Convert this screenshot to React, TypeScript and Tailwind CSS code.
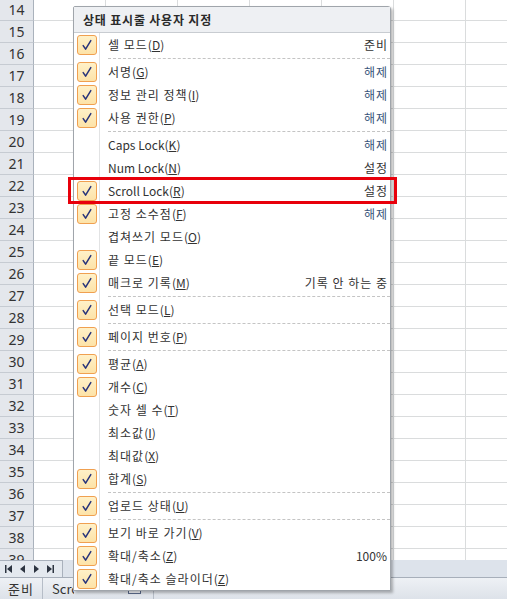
import { FC, ReactNode } from "react";

type Item = {
  label: ReactNode;
  value?: string;
  checked: boolean;
  sepAfter?: boolean;
  blue?: boolean;
};

// Korean label gets a bit of tracking (Malgun-like width), latin ones don't
const m = (text: string, key: string, latin = false) => (
  <>
    <span className={latin ? "" : "tracking-[1px]"}>{text}</span>(<u>{key}</u>)
  </>
);

const items: Item[] = [
  { label: m("셀 모드", "D"), value: "준비", checked: true, sepAfter: true },
  { label: m("서명", "G"), value: "해제", checked: true, blue: true },
  { label: m("정보 관리 정책", "I"), value: "해제", checked: true, blue: true },
  { label: m("사용 권한", "P"), value: "해제", checked: true, blue: true, sepAfter: true },
  { label: m("Caps Lock", "K", true), value: "해제", checked: false, blue: true },
  { label: m("Num Lock", "N", true), value: "설정", checked: false },
  { label: m("Scroll Lock", "R", true), value: "설정", checked: true },
  { label: m("고정 소수점", "F"), value: "해제", checked: true, blue: true },
  { label: m("겹쳐쓰기 모드", "O"), checked: false },
  { label: m("끝 모드", "E"), checked: true },
  { label: m("매크로 기록", "M"), value: "기록 안 하는 중", checked: true, sepAfter: true },
  { label: m("선택 모드", "L"), checked: true, sepAfter: true },
  { label: m("페이지 번호", "P"), checked: true, sepAfter: true },
  { label: m("평균", "A"), checked: true },
  { label: m("개수", "C"), checked: true },
  { label: m("숫자 셀 수", "T"), checked: false },
  { label: m("최소값", "I"), checked: false },
  { label: m("최대값", "X"), checked: false },
  { label: m("합계", "S"), checked: true, sepAfter: true },
  { label: m("업로드 상태", "U"), checked: true, sepAfter: true },
  { label: m("보기 바로 가기", "V"), checked: true },
  { label: m("확대/축소", "Z"), value: "100%", checked: true },
  { label: m("확대/축소 슬라이더", "Z"), checked: true },
];

const rows = Array.from({ length: 26 }, (_, i) => 14 + i);
const cols = Array.from({ length: 7 }, (_, i) => i);

const CheckBox: FC = () => (
  <div className="w-[20px] h-[20px] rounded-[3px] border border-[#f0a050] bg-gradient-to-b from-[#fff1c8] to-[#fde3a8] flex items-center justify-center">
    <svg width="14" height="14" viewBox="0 0 14 14">
      <path
        d="M3.2 7.6 L5.6 11.2 L10.8 2.6"
        fill="none"
        stroke="#27337a"
        strokeWidth="1.5"
        strokeLinecap="round"
        strokeLinejoin="round"
      />
    </svg>
  </div>
);

const App: FC = () => {
  return (
    <div
      className="relative w-[507px] h-[599px] overflow-hidden flex flex-col bg-white"
      style={{ fontFamily: '"Noto Sans CJK KR", "Noto Sans", sans-serif' }}
    >
      {/* sheet grid */}
      <div className="flex-1 overflow-hidden">
        <div className="-mt-[1px]">
          {rows.map((r) => (
            <div key={r} className="flex h-[22px]">
              <div className="w-[34px] shrink-0 h-full border-r border-b border-r-[#aab2bc] border-b-[#c6cbd2] bg-[#e4e7ec] flex items-center justify-center text-[14px] text-[#333] font-['Noto_Sans']">
                {r}
              </div>
              {cols.map((c) => (
                <div key={c} className="w-[72px] shrink-0 h-full border-r border-b border-[#dadcdd]" />
              ))}
            </div>
          ))}
        </div>
      </div>

      {/* sheet tab bar */}
      <div className="h-[17px] shrink-0 flex bg-[#dde3eb]">
        <div className="w-[63px] h-full bg-[#e4e9ef] border-t border-r border-[#a9b1bc] flex items-center gap-[7px] pl-[5px] text-[#2c3440]">
          <svg width="8" height="8" viewBox="0 0 8 8">
            <rect x="0" y="0" width="1.5" height="8" fill="currentColor" />
            <path d="M7 0 L2 4 L7 8 Z" fill="currentColor" />
          </svg>
          <svg width="6" height="8" viewBox="0 0 6 8">
            <path d="M5 0 L0 4 L5 8 Z" fill="currentColor" />
          </svg>
          <svg width="6" height="8" viewBox="0 0 6 8">
            <path d="M1 0 L6 4 L1 8 Z" fill="currentColor" />
          </svg>
          <svg width="8" height="8" viewBox="0 0 8 8">
            <path d="M1 0 L6 4 L1 8 Z" fill="currentColor" />
            <rect x="6.5" y="0" width="1.5" height="8" fill="currentColor" />
          </svg>
        </div>
      </div>

      {/* status bar */}
      <div className="h-[22px] shrink-0 flex items-center border-t border-[#a7afba] bg-gradient-to-b from-[#eef1f5] to-[#dde2e9] text-[13px] text-[#333]">
        <div className="w-[42px] pl-[8px] tracking-[1px]">준비</div>
        <div className="w-px h-full bg-[#b6bdc7]" />
        <div className="w-[110px] flex items-center">
          <div className="w-[31px] pl-[9px] overflow-hidden whitespace-nowrap">Scroll Lock</div>
          <div className="flex-1 flex justify-end pr-[12px]">
            <svg width="13" height="10" viewBox="0 0 13 10">
              <rect x="0.5" y="1.5" width="12" height="8" fill="#f4f6fa" stroke="#5a6a8a" />
              <rect x="2" y="3" width="9" height="2" fill="#4a7ac8" />
            </svg>
          </div>
        </div>
        <div className="w-px h-full bg-[#b6bdc7]" />
      </div>

      {/* context menu */}
      <div className="absolute left-[73px] top-[6px] w-[318px] border border-[#a0a5ab] rounded-tr-[3px] rounded-tl-[2px] bg-white shadow-[2px_2px_3px_rgba(0,0,0,0.28)] text-[12px] text-[#333]">
        <div className="h-[26px] bg-[#eef0f3] border-b border-[#c8ccd1] flex items-center pl-[9px] font-bold text-[#2a2a2a] tracking-[0.8px]">
          상태 표시줄 사용자 지정
        </div>
        {items.map((it, i) => (
          <div key={i}>
            <div className="flex h-[23px]">
              <div className="w-[26px] shrink-0 h-full flex items-center justify-center border-r border-[#e2e3e4]">
                {it.checked && <CheckBox />}
              </div>
              <div className="flex-1 flex items-center justify-between pl-[8px] pr-[3px]">
                <span>{it.label}</span>
                {it.value && (
                  <span
                    className={`${it.value === "100%" ? "" : "tracking-[1px] -mr-[1px]"} ${
                      it.blue ? "text-[#38557a]" : "text-[#333]"
                    }`}
                  >
                    {it.value}
                  </span>
                )}
              </div>
            </div>
            {it.sepAfter && (
              <div className="flex h-[4px]">
                <div className="w-[26px] shrink-0 h-full border-r border-[#e2e3e4]" />
                <div className="flex-1 ml-[8px] flex items-center">
                  <div className="w-full border-t border-dashed border-[#c4c4c4]" />
                </div>
              </div>
            )}
          </div>
        ))}
      </div>

      {/* highlight annotation */}
      <div className="absolute left-[68px] top-[177px] w-[329px] h-[27px] border-[3px] border-[#e8000b]" />
    </div>
  );
};

export default App;
